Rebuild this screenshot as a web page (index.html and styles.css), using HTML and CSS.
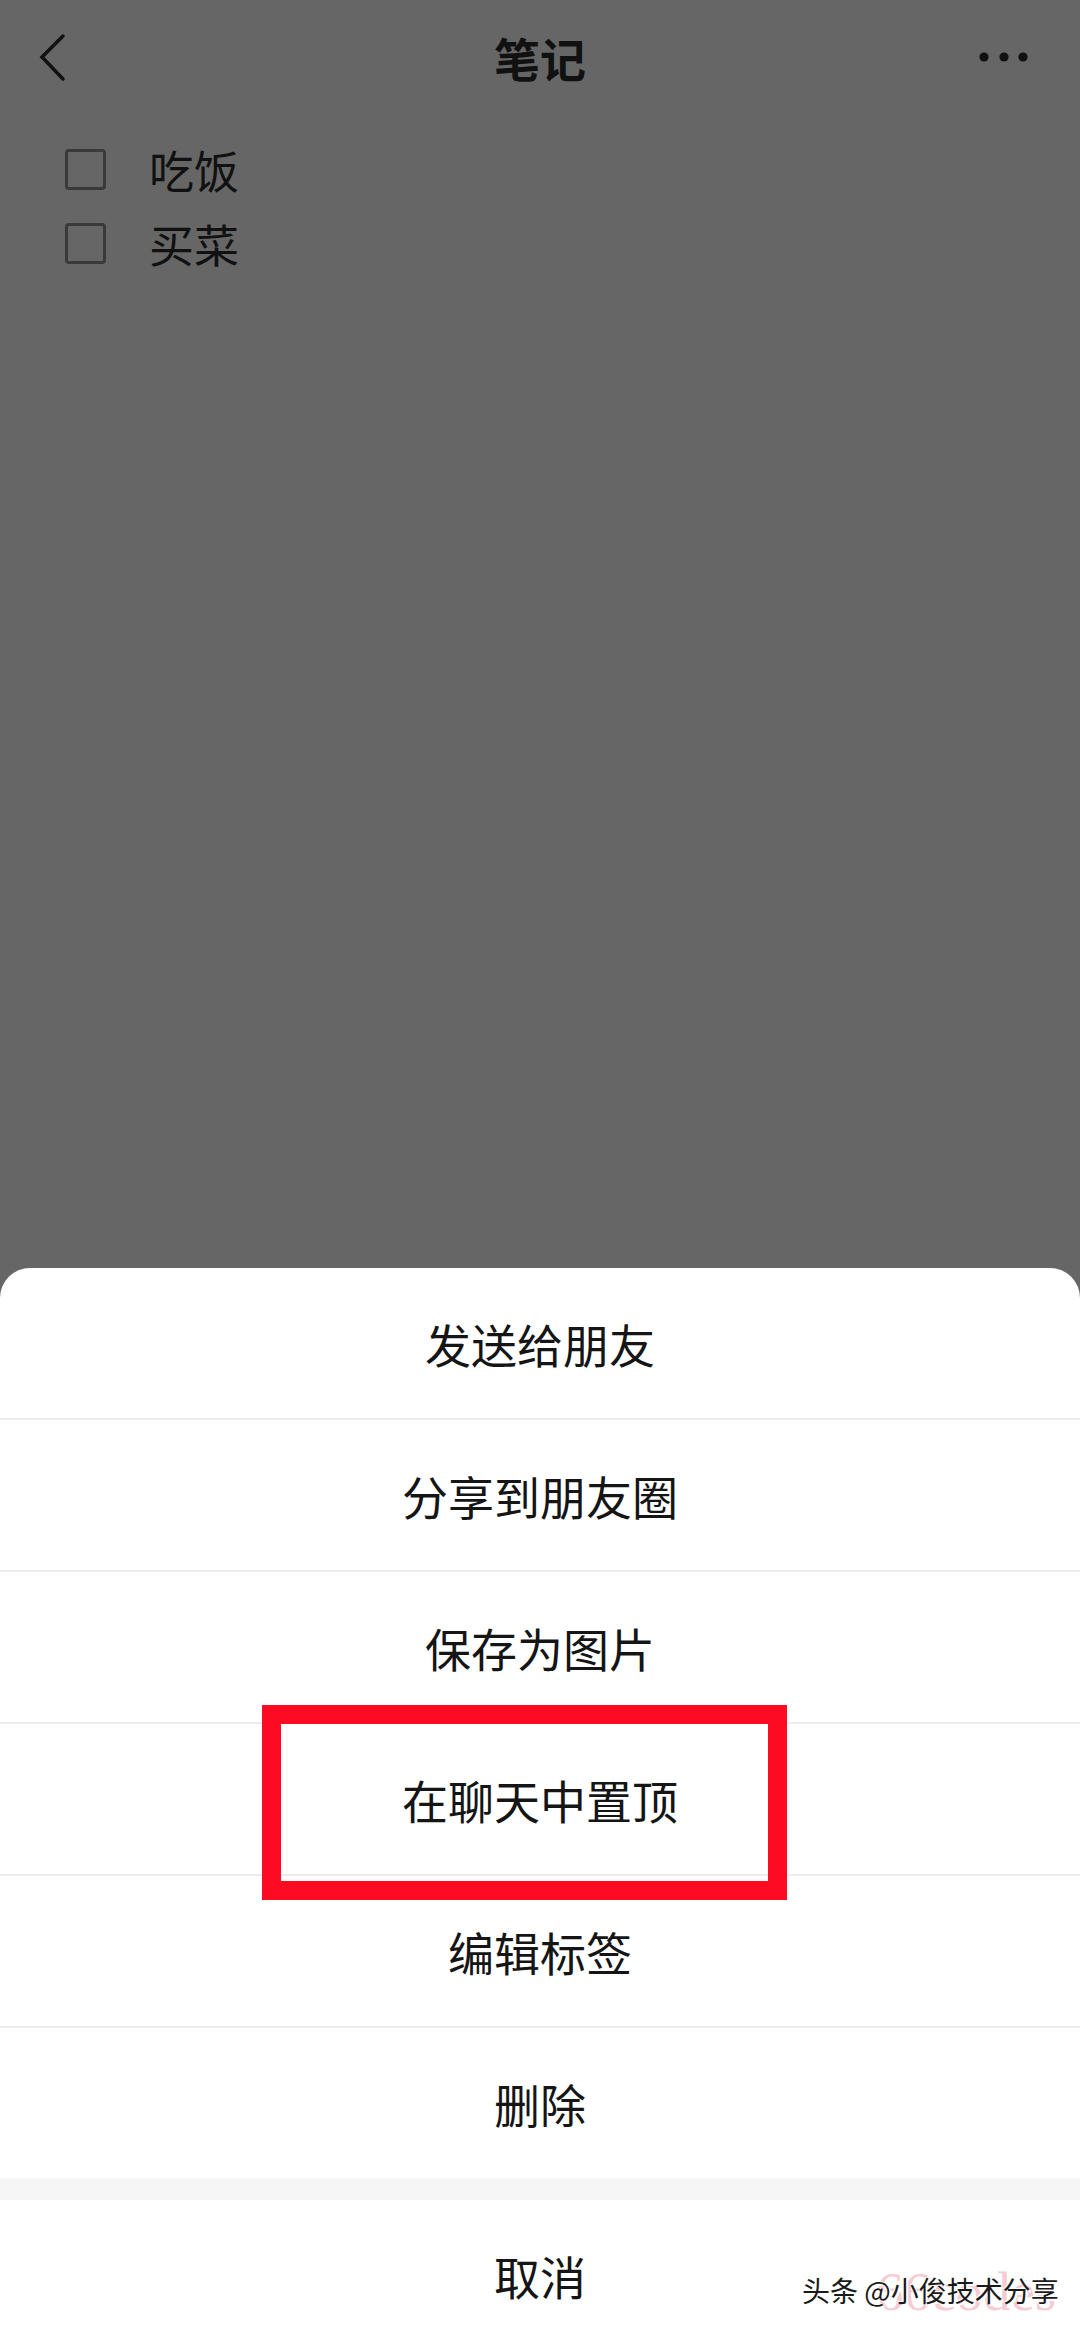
FILE: index.html
```html
<!DOCTYPE html>
<html lang="zh-CN">
<head>
  <meta charset="UTF-8">
  <meta name="viewport" content="width=device-width, initial-scale=1.0">
  <title>笔记</title>
  <link rel="stylesheet" href="styles.css">
</head>
<body>
  <div class="note">
    <div class="topbar">
      <svg class="back" width="48" height="60" viewBox="0 0 48 60">
        <polyline points="35,9 14,30 35,52" fill="none" stroke="#111" stroke-width="3.5" stroke-linecap="round" stroke-linejoin="miter"/>
      </svg>
      <div class="title">笔记</div>
      <svg class="more" width="60" height="24" viewBox="0 0 60 24">
        <circle cx="14" cy="12" r="4.6" fill="#111"/>
        <circle cx="34" cy="12" r="4.6" fill="#111"/>
        <circle cx="53" cy="12" r="4.6" fill="#111"/>
      </svg>
    </div>

    <ul class="todo">
      <li><span class="box"></span>吃饭</li>
      <li><span class="box"></span>买菜</li>
    </ul>
  </div>

  <div class="sheet">
    <div class="item">发送给朋友</div>
    <div class="item">分享到朋友圈</div>
    <div class="item">保存为图片</div>
    <div class="item marked">在聊天中置顶<span class="mark"></span></div>
    <div class="item">编辑标签</div>
    <div class="item last">删除</div>
    <div class="item cancel">取消</div>
  </div>

  <div class="stamp">66codes</div>
  <div class="credit">头条 @小俊技术分享</div>
</body>
</html>
```

FILE: styles.css
```css
html, body {
  margin: 0;
  padding: 0;
}
body {
  position: relative;
  height: 2326px;
  overflow: hidden;
  background: #666666;
  font-family: "Noto Sans CJK SC", "Noto Sans", sans-serif;
  color: #111;
}
.note {
  height: 1268px;
}
.topbar {
  display: grid;
  grid-template-columns: 1fr auto 1fr;
  align-items: center;
  height: 114px;
}
.back {
  display: block;
  margin-left: 28px;
}
.title {
  font-size: 46px;
  font-weight: bold;
  line-height: 1;
}
.more {
  display: block;
  justify-self: end;
  margin-right: 50px;
}
.todo {
  list-style: none;
  margin: 18px 0 0;
  padding: 0 0 0 65px;
}
.todo li {
  display: flex;
  align-items: center;
  gap: 43px;
  height: 74px;
  font-size: 45px;
  line-height: 1;
}
.box {
  width: 41px;
  height: 41px;
  box-sizing: border-box;
  border: 3px solid #3a3a3a;
  border-radius: 4px;
}
.sheet {
  background: #fff;
  border-radius: 30px 30px 0 0;
}
.item {
  position: relative;
  height: 150px;
  display: flex;
  align-items: center;
  justify-content: center;
  font-size: 46px;
  color: #151515;
  border-bottom: 2px solid #ececec;
}
.item.last {
  border-bottom: none;
}
.item.cancel {
  border-bottom: none;
  border-top: 22px solid #f6f6f6;
}
.mark {
  position: absolute;
  left: 262px;
  top: -19px;
  width: 525px;
  height: 195px;
  box-sizing: border-box;
  border: 19px solid #fd0b22;
}
.stamp {
  position: absolute;
  left: 876px;
  top: 2264px;
  font-family: "Liberation Serif", serif;
  font-size: 55px;
  line-height: 1;
  color: rgba(238, 160, 175, 0.55);
}
.credit {
  position: absolute;
  left: 802px;
  top: 2271px;
  font-size: 28px;
  line-height: 38px;
  color: #1a1a1a;
  text-shadow: 2px 2px 0 #fff, -1px -1px 0 #fff;
}
```
